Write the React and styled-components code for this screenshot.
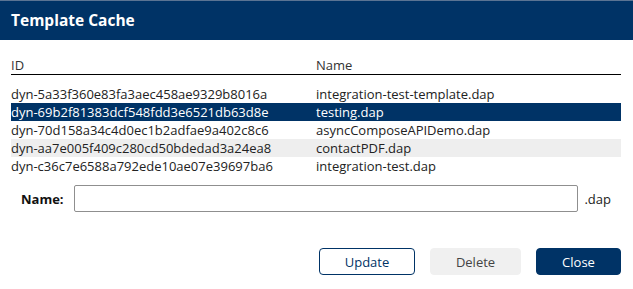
import React, { useState } from 'react';
import styled, { createGlobalStyle } from 'styled-components';

const GlobalStyle = createGlobalStyle`
  html, body {
    margin: 0;
    padding: 0;
    background: #fff;
  }
  body {
    font-family: 'Open Sans', 'Liberation Sans', sans-serif;
    color: #222;
  }
`;

const NAVY = '#003366';

const templates = [
  { id: 'dyn-5a33f360e83fa3aec458ae9329b8016a', name: 'integration-test-template.dap' },
  { id: 'dyn-69b2f81383dcf548fdd3e6521db63d8e', name: 'testing.dap' },
  { id: 'dyn-70d158a34c4d0ec1b2adfae9a402c8c6', name: 'asyncComposeAPIDemo.dap' },
  { id: 'dyn-aa7e005f409c280cd50bdedad3a24ea8', name: 'contactPDF.dap' },
  { id: 'dyn-c36c7e6588a792ede10ae07e39697ba6', name: 'integration-test.dap' },
];

const App = () => {
  const [selected, setSelected] = useState(1);
  const [hovered] = useState(3);
  const [name, setName] = useState('');

  return (
    <>
      <GlobalStyle />
      <Dialog>
        <Header>Template Cache</Header>
        <Body>
          <HeadRow>
            <HeadCell>ID</HeadCell>
            <HeadCell>Name</HeadCell>
          </HeadRow>
          <List>
            {templates.map((t, i) => (
              <Row
                key={t.id}
                $selected={i === selected}
                $hovered={i === hovered && i !== selected}
                onClick={() => setSelected(i)}
              >
                <Cell>{t.id}</Cell>
                <Cell>{t.name}</Cell>
              </Row>
            ))}
          </List>
          <NameRow>
            <NameLabel>Name:</NameLabel>
            <NameInput value={name} onChange={e => setName(e.target.value)} />
            <Ext>.dap</Ext>
          </NameRow>
        </Body>
        <Footer>
          <Button $variant="outline" $width={96}>Update</Button>
          <Button $variant="muted" $width={91}>Delete</Button>
          <Button $variant="primary" $width={85}>Close</Button>
        </Footer>
      </Dialog>
    </>
  );
};

export default App;

const Dialog = styled.div`
  width: 633px;
  height: 289px;
  display: flex;
  flex-direction: column;
  background: #fff;
`;

const Header = styled.div`
  height: 39px;
  line-height: 39px;
  border-top: 1px solid #5b7493;
  background: ${NAVY};
  color: #fff;
  font-size: 15.5px;
  font-weight: 700;
  padding-left: 11px;
`;

const Body = styled.div`
  padding: 16px 12px 0 11px;
`;

const HeadRow = styled.div`
  display: grid;
  grid-template-columns: 305px 1fr;
  height: 18px;
  line-height: 18px;
  border-bottom: 1px solid #000;
`;

const HeadCell = styled.div`
  font-size: 13px;
  color: #333;
`;

const List = styled.div`
  margin-top: 10px;
`;

const Row = styled.div`
  display: grid;
  grid-template-columns: 305px 1fr;
  height: 18px;
  line-height: 18px;
  cursor: default;
  background: ${p => (p.$selected ? NAVY : p.$hovered ? '#eeeeee' : 'transparent')};
  color: ${p => (p.$selected ? '#fff' : '#222')};
`;

const Cell = styled.div`
  font-size: 13px;
  white-space: nowrap;
  overflow: hidden;
`;

const NameRow = styled.div`
  display: flex;
  align-items: center;
  margin-top: 10px;
  padding: 0 10px 0 10px;
  height: 27px;
`;

const NameLabel = styled.label`
  font-size: 13px;
  font-weight: 700;
  color: #111;
  width: 53px;
`;

const NameInput = styled.input`
  flex: 1;
  height: 27px;
  box-sizing: border-box;
  border: 1px solid #8f8f8f;
  border-radius: 2px;
  padding: 0 6px;
  font-family: inherit;
  font-size: 13px;
  outline: none;
`;

const Ext = styled.span`
  font-size: 13px;
  color: #222;
  margin-left: 6px;
`;

const Footer = styled.div`
  margin-top: auto;
  display: flex;
  justify-content: flex-end;
  gap: 15px;
  padding: 0 12px 14px 0;
`;

const variants = {
  outline: `background: #fff; color: ${NAVY}; border-color: ${NAVY};`,
  muted: `background: #f0f0f0; color: #444; border-color: #f0f0f0;`,
  primary: `background: ${NAVY}; color: #fff; border-color: ${NAVY};`,
};

const Button = styled.button`
  height: 27px;
  width: ${p => p.$width}px;
  padding: 0;
  box-sizing: border-box;
  border: 1px solid;
  border-radius: 4px;
  font-family: inherit;
  font-size: 13px;
  cursor: pointer;
  ${p => variants[p.$variant]}
`;
